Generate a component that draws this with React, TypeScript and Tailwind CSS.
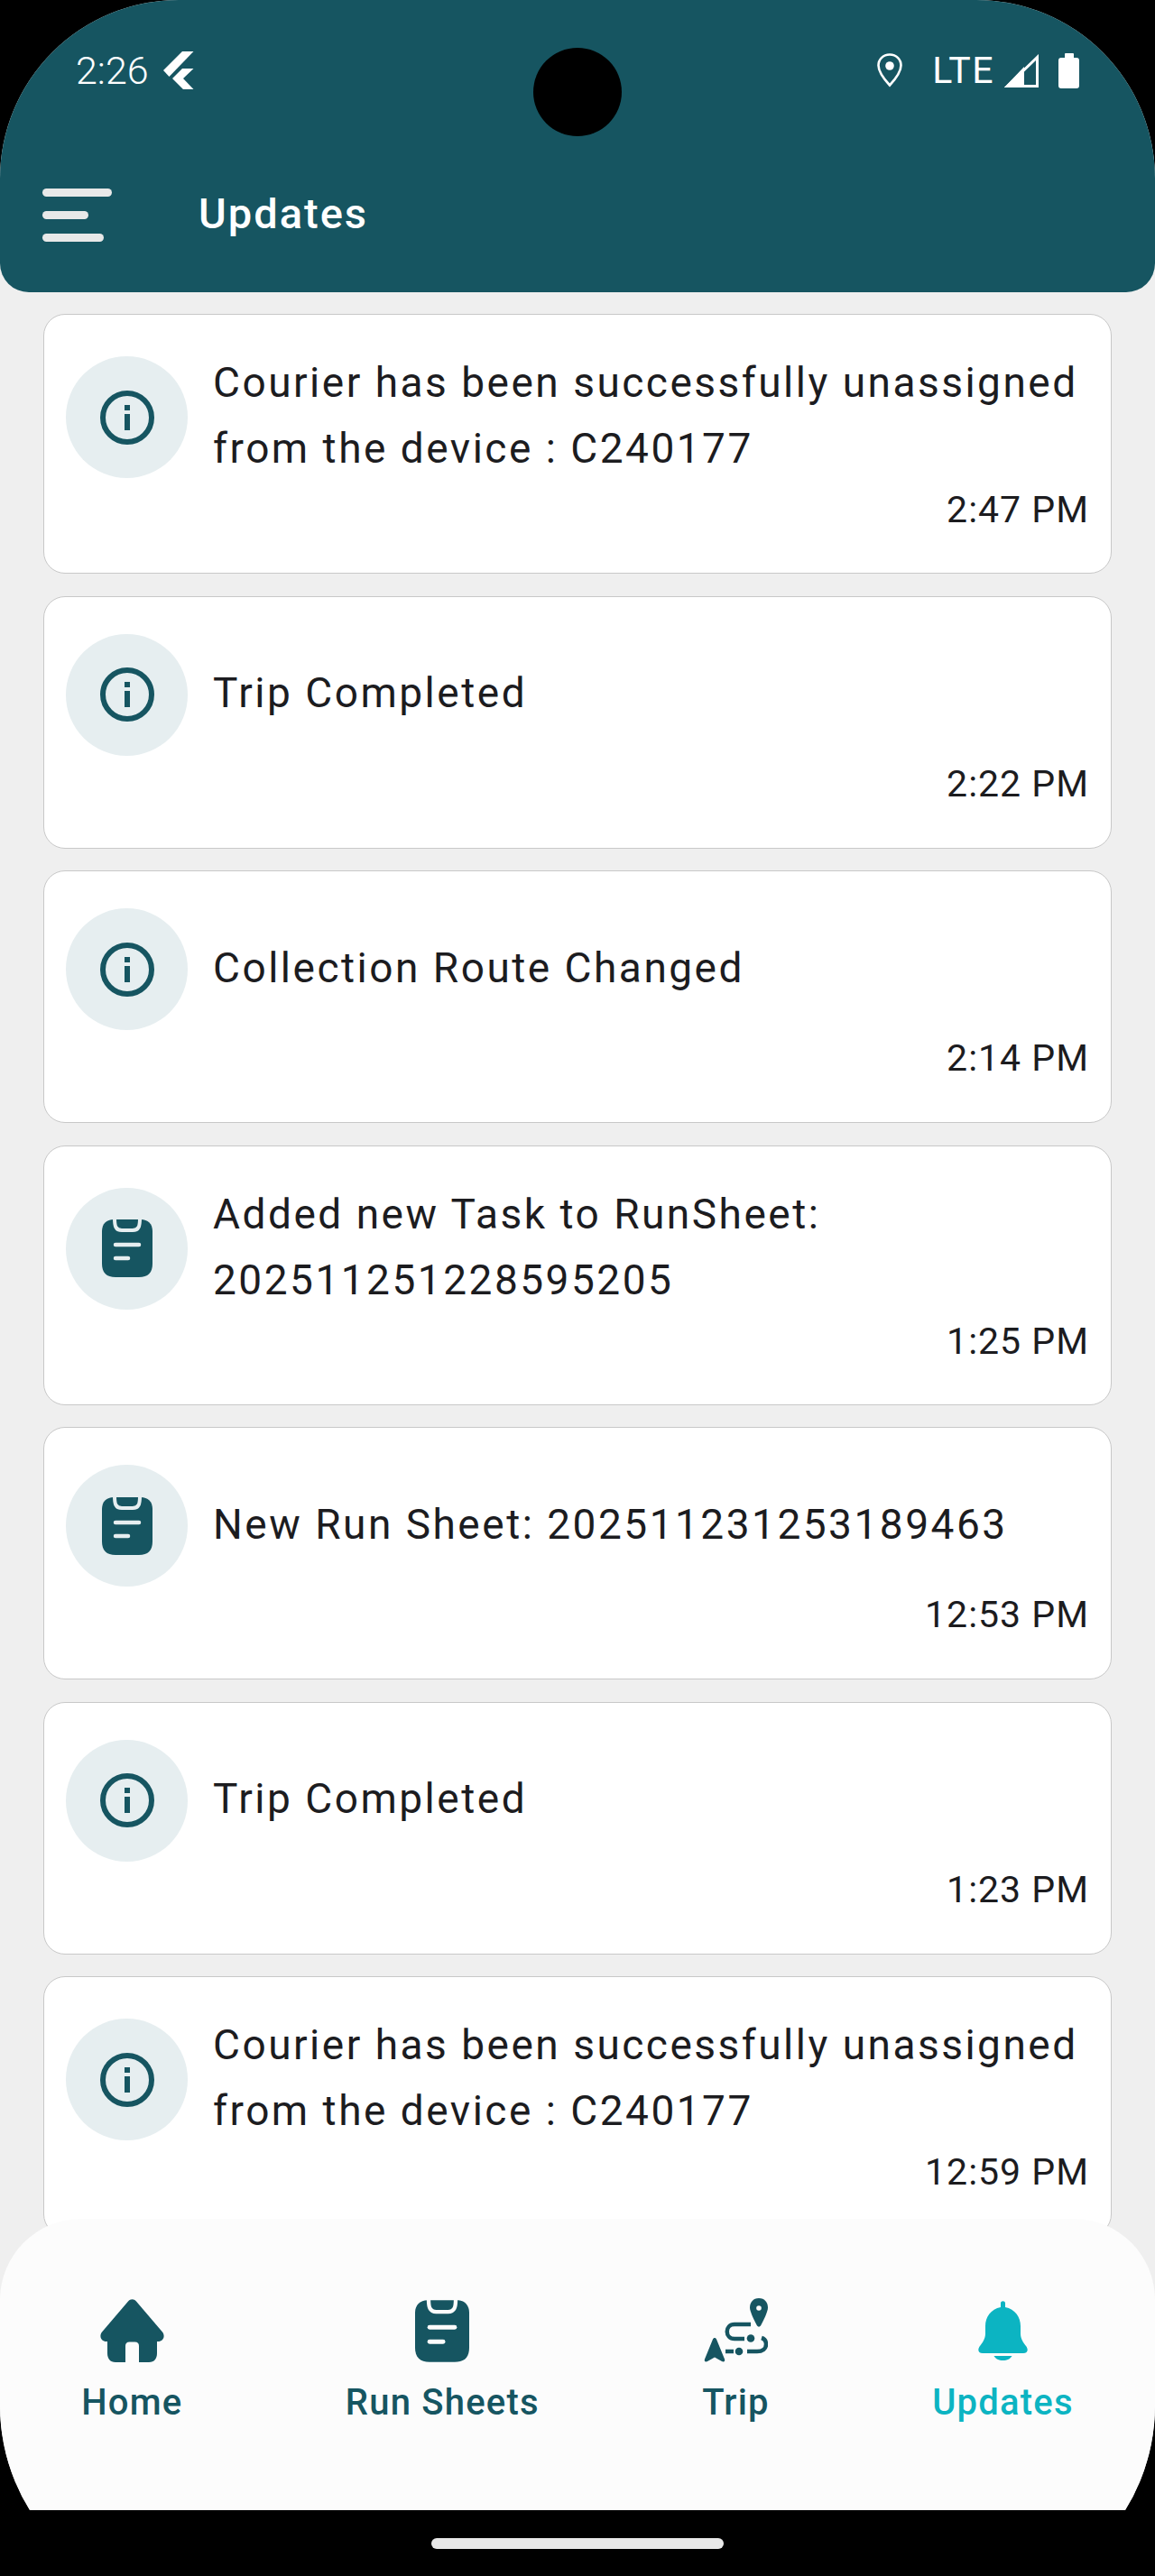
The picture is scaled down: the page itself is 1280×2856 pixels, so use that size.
const TEAL = "#165561";

function InfoIcon() {
  return (
    <svg width="60" height="60" viewBox="0 0 60 60" fill="none">
      <circle cx="30" cy="30" r="27" stroke={TEAL} strokeWidth="6" />
      <rect x="27" y="16" width="6" height="6" fill={TEAL} />
      <rect x="27" y="26" width="6" height="18" fill={TEAL} />
    </svg>
  );
}

function ClipboardIcon({ w = 56, h = 66, line = "#e6eef0" }: { w?: number; h?: number; line?: string }) {
  return (
    <svg width={w} height={h} viewBox="0 0 56 66" fill="none">
      <path d="M13 1H43C51 1 56 6 56 14V50C56 60 51 65 41 65H15C5 65 0 60 0 50V14C0 6 5 1 13 1Z" fill={TEAL} />
      <path d="M14 0C14 8 15 13 22 13H34C41 13 42 8 42 0" stroke={line} strokeWidth="4" fill="none" />
      <path d="M15 29H41" stroke={line} strokeWidth="4.500" strokeLinecap="round" />
      <path d="M15 44H29" stroke={line} strokeWidth="4.500" strokeLinecap="round" />
    </svg>
  );
}

function HomeIcon() {
  return (
    <svg width="71" height="70" viewBox="0 0 71 70" fill={TEAL}>
      <path d="M31 2.500C33.500 -0.500 37.500 -0.500 40 2.500L69 36.500C72.500 41 70 47 64 47H63V60C63 66 60 70 54 70H43V52C43 49 41.500 47.500 38.500 47.500H32.500C29.500 47.500 28 49 28 52V70H17C11 70 8 66 8 60V47H7C1 47 -1.500 41 2 36.500Z" />
    </svg>
  );
}

function TripIcon() {
  return (
    <svg width="72" height="74" viewBox="0 0 72 74" fill="none">
      <path d="M62 1C55.500 1 52 6 52 11.500C52 16 58 28 60 31.500C61 33 63 33 64 31.500C66 28 72 16 72 11.500C72 6 68.500 1 62 1Z" fill={TEAL} />
      <circle cx="62" cy="12" r="2.800" fill="#fcfcfc" />
      <path d="M11 46.500C12 44.500 14 44.500 15 46.500L24 68.500C25 71 23 72 21 71L13 66.500L5 71C3 72 1 71 2 68.500Z" fill={TEAL} />
      <path d="M53 30H35C24 30 24 46 35 46H46" stroke={TEAL} strokeWidth="4.500" />
      <circle cx="53" cy="45.500" r="4.300" fill={TEAL} />
      <circle cx="40" cy="60" r="4.300" fill={TEAL} />
      <path d="M25 60H34" stroke={TEAL} strokeWidth="4.500" />
      <path d="M49 60H60C66 60 70 57 70 52C70 48 68 46 65 45" stroke={TEAL} strokeWidth="4.500" />
    </svg>
  );
}

function BellIcon() {
  return (
    <svg width="55" height="66" viewBox="0 0 55 66" fill="#0cb4c2">
      <path d="M25 2.500C25 -0.500 30 -0.500 30 2.500V7C41 9 47 18 47 28V36C47 42 50 46 53 50C56 54 55 58 50 58H5C0 58 -1 54 2 50C5 46 8 42 8 36V28C8 18 14 9 25 7Z" />
      <path d="M17.500 61H37.500C36 64 32 66 27.500 66C23 66 19 64 17.500 61Z" />
    </svg>
  );
}

function FlutterIcon() {
  return (
    <svg width="34" height="42" viewBox="0 0 34 42" fill="white">
      <path d="M33.500 0H21L0 21L6.500 28Z" />
      <path d="M33.500 19H21L10 30L22 42H33.500L22 30Z" />
    </svg>
  );
}

function LocationIcon() {
  return (
    <svg width="28" height="38" viewBox="0 0 28 38" fill="none">
      <path d="M14 1.500C6.500 1.500 1.500 7 1.500 13.500C1.500 20 8 29 14 35.500C20 29 26.500 20 26.500 13.500C26.500 7 21.500 1.500 14 1.500Z" stroke="white" strokeWidth="2.600" />
      <circle cx="14" cy="14" r="4.800" fill="white" />
    </svg>
  );
}

function SignalIcon() {
  return (
    <svg width="38" height="37" viewBox="0 0 38 37" fill="none">
      <path d="M36.500 3.500V35.500H3.500Z" stroke="white" strokeWidth="3" />
      <path d="M22 17V37H0L22 14Z" fill="white" />
    </svg>
  );
}

function BatteryIcon() {
  return (
    <svg width="23" height="39" viewBox="0 0 23 39" fill="white">
      <path d="M7 1C7 0.500 7.500 0 8 0H16C16.500 0 17 0.500 17 1V5H20C22 5 23 6 23 8V36C23 38 22 39 20 39H3C1 39 0 38 0 36V8C0 6 1 5 3 5H7Z" />
    </svg>
  );
}

type Item = { text: string[]; time: string; icon: "info" | "clip" };

const items: Item[] = [
  { text: ["Courier has been successfully unassigned", "from the device : C240177"], time: "2:47 PM", icon: "info" },
  { text: ["Trip Completed"], time: "2:22 PM", icon: "info" },
  { text: ["Collection Route Changed"], time: "2:14 PM", icon: "info" },
  { text: ["Added new Task to RunSheet:", "202511251228595205"], time: "1:25 PM", icon: "clip" },
  { text: ["New Run Sheet: 202511231253189463"], time: "12:53 PM", icon: "clip" },
  { text: ["Trip Completed"], time: "1:23 PM", icon: "info" },
  { text: ["Courier has been successfully unassigned", "from the device : C240177"], time: "12:59 PM", icon: "info" },
];

function Card({ item }: { item: Item }) {
  const two = item.text.length === 2;
  return (
    <div className={`shrink-0 rounded-[24px] border border-[#c8c8c8] bg-white pr-[24px] pl-[24px] ${two ? "pt-[39px]" : "pt-[41px]"}`}>
      <div className="flex items-center gap-[28px]">
        <div className="flex h-[135px] w-[135px] shrink-0 items-center justify-center rounded-full bg-[#e6eef0]">
          {item.icon === "info" ? <InfoIcon /> : <ClipboardIcon />}
        </div>
        <div className="min-w-0 flex-1 pb-[3px]">
          {item.text.map((t) => (
            <div key={t} className="whitespace-nowrap text-[46px] leading-[73px] tracking-[2.5px] text-[#1c1c1f]">
              {t}
            </div>
          ))}
        </div>
      </div>
      <div className={`text-right text-[41px] leading-[50px] tracking-[1px] text-[#1c1c1f] ${two ? "mt-[3px] pb-[45px]" : "mt-[6px] pb-[46px]"}`}>
        {item.time}
      </div>
    </div>
  );
}

function NavItem({ icon, label, active }: { icon: React.ReactNode; label: string; active?: boolean }) {
  return (
    <div className="flex flex-col items-center">
      <div className="flex h-[74px] items-center">{icon}</div>
      <div className={`mt-[18px] text-[40px] font-medium leading-[50px] tracking-[1.2px] ${active ? "text-[#0cb4c2]" : "text-[#165561]"}`}>{label}</div>
    </div>
  );
}

export default function App() {
  return (
    <div className="flex h-[2856px] w-[1280px] flex-col overflow-hidden bg-black font-['Roboto',sans-serif]">
      <div className="h-[2783px] shrink-0 overflow-hidden">
        <div className="relative flex h-[2887px] flex-col overflow-hidden rounded-t-[198px] rounded-b-[220px] bg-[#efefef]">
          <header className="h-[324px] shrink-0 rounded-b-[32px] bg-[#165561]">
            <div className="flex h-[209px] items-start justify-between pt-[57px] pr-[84px] pl-[84px]">
              <div className="flex items-center gap-[16px]">
                <span className="text-[43px] font-light leading-[42px] text-white">2:26</span>
                <FlutterIcon />
              </div>
              <div className="flex items-center">
                <LocationIcon />
                <span className="ml-[33px] text-[41px] leading-[42px] tracking-[1.5px] text-white">LTE</span>
                <span className="ml-[11px]"><SignalIcon /></span>
                <span className="ml-[22px]"><BatteryIcon /></span>
              </div>
            </div>
            <div className="flex items-center pl-[47px]">
              <div className="flex w-[77px] flex-col gap-[16px]">
                <div className="h-[9px] w-[77px] rounded-full bg-[#e8e8e8]" />
                <div className="h-[9px] w-[51px] rounded-full bg-[#e8e8e8]" />
                <div className="h-[9px] w-[68px] rounded-full bg-[#e8e8e8]" />
              </div>
              <div className="mt-[-4px] ml-[96px] text-[47px] font-medium leading-[60px] tracking-[2px] text-white">Updates</div>
            </div>
          </header>
          <div className="flex flex-1 flex-col gap-[24.5px] overflow-hidden px-[48px] pt-[24px]">
            {items.map((item, i) => (
              <Card key={i} item={item} />
            ))}
          </div>
          <div className="absolute top-[53px] left-1/2 h-[98px] w-[98px] -translate-x-1/2 rounded-full bg-black" />
          <nav className="absolute inset-x-0 top-[2460px] h-[427px] rounded-t-[90px] bg-[#fcfcfc] pt-[87px]">
            <div className="flex items-start justify-around">
              <NavItem icon={<HomeIcon />} label="Home" />
              <NavItem icon={<ClipboardIcon w={60} h={71} line="#fcfcfc" />} label="Run Sheets" />
              <NavItem icon={<TripIcon />} label="Trip" />
              <NavItem icon={<BellIcon />} label="Updates" active />
            </div>
          </nav>
        </div>
      </div>
      <div className="flex flex-1 justify-center pt-[31px]">
        <div className="h-[12px] w-[324px] rounded-full bg-[#e8e8e8]" />
      </div>
    </div>
  );
}
